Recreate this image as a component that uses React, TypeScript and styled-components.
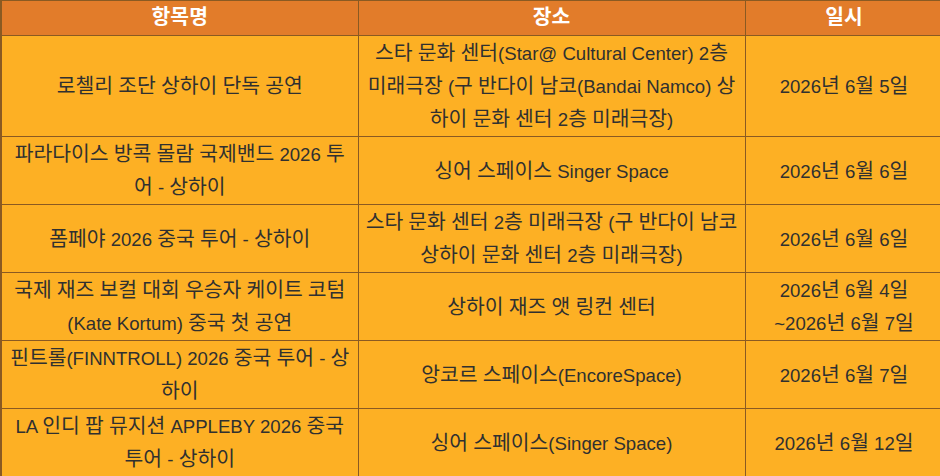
import React from 'react';
import styled, { createGlobalStyle } from 'styled-components';

interface Show {
  title: string[];
  venue: string[];
  date: string[];
}

// line breaks follow the reference layout
const shows: Show[] = [
  {
    title: ['로첼리 조단 상하이 단독 공연'],
    venue: ['스타 문화 센터(Star@ Cultural Center) 2층', '미래극장 (구 반다이 남코(Bandai Namco) 상', '하이 문화 센터 2층 미래극장)'],
    date: ['2026년 6월 5일'],
  },
  {
    title: ['파라다이스 방콕 몰람 국제밴드 2026 투', '어 - 상하이'],
    venue: ['싱어 스페이스 Singer Space'],
    date: ['2026년 6월 6일'],
  },
  {
    title: ['폼페야 2026 중국 투어 - 상하이'],
    venue: ['스타 문화 센터 2층 미래극장 (구 반다이 남코', '상하이 문화 센터 2층 미래극장)'],
    date: ['2026년 6월 6일'],
  },
  {
    title: ['국제 재즈 보컬 대회 우승자 케이트 코텀', '(Kate Kortum) 중국 첫 공연'],
    venue: ['상하이 재즈 앳 링컨 센터'],
    date: ['2026년 6월 4일', '~2026년 6월 7일'],
  },
  {
    title: ['핀트롤(FINNTROLL) 2026 중국 투어 - 상', '하이'],
    venue: ['앙코르 스페이스(EncoreSpace)'],
    date: ['2026년 6월 7일'],
  },
  {
    title: ['LA 인디 팝 뮤지션 APPLEBY 2026 중국', '투어 - 상하이'],
    venue: ['싱어 스페이스(Singer Space)'],
    date: ['2026년 6월 12일'],
  },
];

const GlobalStyle = createGlobalStyle`
  body {
    margin: 0;
    overflow: hidden;
    background: #ffffff;
    font-family: "Liberation Sans", "Noto Sans CJK KR", sans-serif;
  }
`;

const Table = styled.table`
  border-collapse: collapse;
  width: 942px;
  table-layout: fixed;
  font-size: 18.6px;
  color: #303030;
`;

// hangul runs are set a bit larger so they take the width of the original font
const Hangul = styled.span`
  font-family: "Noto Sans CJK KR", sans-serif;
  font-size: 20.4px;
  line-height: 0;
`;

const HeadCell = styled.th<{ $width: number }>`
  box-sizing: border-box;
  width: ${(p) => p.$width}px;
  height: 35px;
  padding: 0 6px;
  background: #e27c2a;
  color: #ffffff;
  font-weight: bold;
  text-align: center;
  border: 1px solid #8a5a22;
  &:first-child {
    border-left-width: 2px;
  }
`;

const Cell = styled.td`
  padding: 1px 6px 0;
  background: #fdb024;
  line-height: 33px;
  text-align: center;
  vertical-align: middle;
  border: 1px solid #8a5a22;
  &:first-child {
    border-left-width: 2px;
  }
`;

const Line = styled.div`
  white-space: nowrap;
`;

const Text: React.FC<{ value: string }> = ({ value }) => (
  <>
    {value.split(/([\uac00-\ud7a3]+)/).map((part, i) =>
      /[\uac00-\ud7a3]/.test(part) ? <Hangul key={i}>{part}</Hangul> : part
    )}
  </>
);

const Lines: React.FC<{ lines: string[] }> = ({ lines }) => (
  <>
    {lines.map((l, i) => (
      <Line key={i}>
        <Text value={l} />
      </Line>
    ))}
  </>
);

export default function App() {
  return (
    <>
      <GlobalStyle />
      <Table>
        <thead>
          <tr>
            <HeadCell $width={357}><Text value="항목명" /></HeadCell>
            <HeadCell $width={387}><Text value="장소" /></HeadCell>
            <HeadCell $width={198}><Text value="일시" /></HeadCell>
          </tr>
        </thead>
        <tbody>
          {shows.map((s, i) => (
            <tr key={i}>
              <Cell><Lines lines={s.title} /></Cell>
              <Cell><Lines lines={s.venue} /></Cell>
              <Cell><Lines lines={s.date} /></Cell>
            </tr>
          ))}
        </tbody>
      </Table>
    </>
  );
}
